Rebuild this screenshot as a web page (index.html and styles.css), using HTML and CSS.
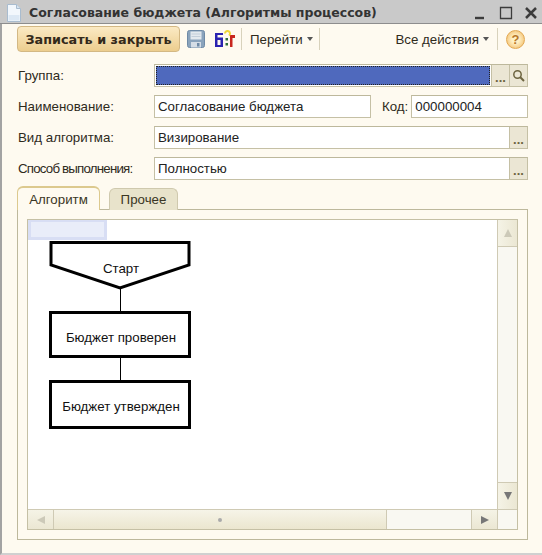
FILE: index.html
```html
<!DOCTYPE html>
<html lang="ru">
<head>
<meta charset="utf-8">
<title>Согласование бюджета</title>
<link rel="stylesheet" href="styles.css">
</head>
<body>
<div class="window">
  <header class="titlebar">
    <svg class="doc-icon" width="16" height="18" viewBox="0 0 16 18"><path d="M1.500 .5H10.500L14.500 4.500V17.500H1.500Z" fill="#f2f7fc" stroke="#a9bccf"/><path d="M10.500 .5V4.500H14.500" fill="#d6e3f0" stroke="#a9bccf"/><path d="M2.500 11H13.500V16.500H2.500Z" fill="#dce8f4"/></svg>
    <span class="title">Согласование бюджета (Алгоритмы процессов)</span>
    <div class="win-controls">
      <svg width="14" height="14" viewBox="0 0 14 14"><path d="M1 12H10" stroke="#3c3c3c" stroke-width="2.400"/></svg>
      <svg width="14" height="14" viewBox="0 0 14 14"><path d="M1.500 1.500H12.500V12.500H1.500Z" fill="none" stroke="#3c3c3c" stroke-width="1.300"/></svg>
      <svg width="12" height="14" viewBox="0 0 12 14"><path d="M1 2L11 12M11 2L1 12" stroke="#3c3c3c" stroke-width="2.500"/></svg>
    </div>
  </header>
  <main class="body">
    <div class="toolbar">
      <button class="primary">Записать и закрыть</button>
      <svg class="save" width="18" height="18" viewBox="0 0 18 18"><rect x=".5" y=".5" width="17" height="17" rx="2" fill="#8aa3bc" stroke="#6f8aa6"/><rect x="3.500" y="1.500" width="11" height="8" fill="#e4e9ee"/><path d="M4.500 4H13.500M4.500 6.500H13.500" stroke="#c3ced9"/><rect x="4" y="12" width="10" height="5.500" fill="#d5dde6"/><rect x="10" y="13" width="2.500" height="3.500" fill="#6f8aa6"/></svg>
      <svg class="bi" width="22" height="18" viewBox="0 0 22 18"><path d="M1 3H9V5H3.500V7.500H9V17H1Z M3.500 10V15H6.500V10Z" fill="#2a22b0" fill-rule="evenodd"/><path d="M16 5H21V8H18.500V17H16Z" fill="#c8261e"/><rect x="11.500" y="8" width="2.500" height="2.500" fill="#2f6f3a"/><rect x="11.500" y="13" width="2.500" height="2.500" fill="#2f6f3a"/><path d="M11 3.500A2.500 2.500 0 1 1 15 5.500" fill="none" stroke="#efd83a" stroke-width="2"/></svg>
      <span class="tb-sep"></span>
      <span class="tb-menu go">Перейти<i class="caret"></i></span>
      <span class="tb-sep after-go"></span>
      <span class="spacer"></span>
      <span class="tb-menu">Все действия<i class="caret"></i></span>
      <span class="tb-sep right"></span>
      <span class="help">?</span>
    </div>
    <div class="row">
      <label>Группа:</label>
      <div class="field grow selected"><span class="sel-fill"></span><span class="btn dots">...</span><span class="btn">
        <svg width="13" height="13" viewBox="0 0 13 13"><circle cx="5.500" cy="5.500" r="3.700" fill="none" stroke="#6d6440" stroke-width="1.500"/><path d="M8.300 8.300L12 12" stroke="#6d6440" stroke-width="2"/></svg></span></div>
    </div>
    <div class="row">
      <label>Наименование:</label>
      <div class="field name"><span class="val">Согласование бюджета</span></div>
      <label class="code-label">Код:</label>
      <div class="field grow"><span class="val">000000004</span></div>
    </div>
    <div class="row">
      <label>Вид алгоритма:</label>
      <div class="field grow"><span class="val">Визирование</span><span class="btn dots">...</span></div>
    </div>
    <div class="row">
      <label class="tight">Способ выполнения:</label>
      <div class="field grow"><span class="val">Полностью</span><span class="btn dots">...</span></div>
    </div>
    <div class="tabs">
      <span class="tab active">Алгоритм</span>
      <span class="tab">Прочее</span>
    </div>
    <section class="panel">
      <div class="chart-grid">
        <div class="canvas">
          <svg class="diagram" width="471" height="292" viewBox="0 0 471 292">
            <rect x="0" y="0" width="79" height="20" fill="#d8def4"/>
            <rect x="3" y="2" width="73" height="15" fill="#e9edf9"/>
            <g fill="#fff" stroke="#000" stroke-width="3">
              <path d="M23 22.500H161V45L92 68L23 45Z"/>
              <rect x="22.500" y="92.500" width="139" height="44"/>
              <rect x="22.500" y="161.500" width="139" height="46"/>
            </g>
            <path d="M92.500 69V91M92.500 138V160" stroke="#000" fill="none"/>
            <g class="node-text" text-anchor="middle">
              <text x="93" y="53">Старт</text>
              <text x="93" y="122">Бюджет проверен</text>
              <text x="93" y="191">Бюджет утвержден</text>
            </g>
          </svg>
        </div>
        <div class="vbar">
          <span class="sb-btn"><i class="arrow up light"></i></span>
          <span class="sb-track"></span>
          <span class="sb-btn"><i class="arrow down"></i></span>
        </div>
        <div class="hbar">
          <span class="sb-btn h"><i class="arrow left light"></i></span>
          <span class="sb-track h"><span class="thumb"><i class="thumb-dot"></i></span></span>
          <span class="sb-btn h"><i class="arrow right"></i></span>
        </div>
        <div class="corner"></div>
      </div>
    </section>
  </main>
</div>
</body>
</html>
```

FILE: styles.css
```css
* { box-sizing: border-box; }
html, body { margin: 0; padding: 0; }
body {
  width: 542px;
  height: 555px;
  overflow: hidden;
  background: #fff;
  font-family: "Liberation Sans", Arial, sans-serif;
  font-size: 13.300px;
  color: #2e2a1c;
}
.window {
  width: 542px;
  height: 555px;
  display: flex;
  flex-direction: column;
  background: #fefaf0;
}
.titlebar {
  height: 24px;
  flex: none;
  display: flex;
  align-items: center;
  padding: 2px 5px 0 6px;
  background: #c9c9c9;
  border-bottom: 1px solid #8d8d8d;
}
.doc-icon { flex: none; margin-right: 7px; }
.title {
  font-family: "DejaVu Sans", sans-serif;
  font-weight: 700;
  font-size: 12.500px;
  color: #333;
  white-space: nowrap;
}
.win-controls { margin-left: auto; display: flex; gap: 12px; }
.win-controls svg:first-child { margin-right: -1px; }
.body {
  flex: 1;
  display: flex;
  flex-direction: column;
  padding: 2px 14px 13px 15px;
  border-left: 2px solid #a3a3a3;
  border-bottom: 2px solid #d0d0d0;
  min-height: 0;
}
.toolbar {
  height: 26px;
  display: flex;
  align-items: center;
  flex: none;
}
.primary {
  width: 163px;
  height: 26px;
  padding: 0;
  font-family: "DejaVu Sans", sans-serif;
  font-weight: 700;
  font-size: 12.800px;
  color: #33291a;
  background: linear-gradient(#fbeac4, #eccd8e);
  border: 1px solid #d3b884;
  border-radius: 4px;
}
.save { margin-left: 7px; flex: none; }
.bi { margin-left: 9px; flex: none; }
.tb-sep { width: 1px; height: 22px; background: #d8d2bc; margin-left: 5px; flex: none; }
.tb-menu { margin-left: 8px; white-space: nowrap; display: flex; align-items: center; }
.tb-sep.after-go { margin-left: 6px; }
.tb-sep.right { margin-left: 8px; }
.caret {
  width: 0; height: 0; margin-left: 4px;
  border: 3.500px solid transparent;
  border-top: 4px solid #555;
  border-bottom: 0;
}
.spacer { flex: 1; }
.help {
  width: 19px; height: 19px;
  margin-left: 8px;
  margin-right: 3px;
  border-radius: 50%;
  background: radial-gradient(circle, #fff0c4 30%, #efb35c 100%);
  border: 1px solid #e2a851;
  color: #b8772a;
  font-weight: 700;
  font-size: 13px;
  line-height: 17px;
  text-align: center;
}
.row {
  display: flex;
  align-items: center;
  height: 23px;
  margin-top: 8px;
  flex: none;
}
.toolbar + .row { margin-top: 12px; }
.row label { width: 137px; flex: none; white-space: nowrap; padding-left: 1px; }
.row label.tight { letter-spacing: -.8px; }
.row label.code-label { width: auto; margin: 0 3px 0 11px; padding-left: 0; }
.field {
  height: 23px;
  display: flex;
  align-items: stretch;
  background: #fff;
  border: 1px solid #c5c0a5;
  border-top-color: #bdb89c;
  color: #222;
}
.grow { flex: 1; min-width: 0; }
.name { width: 217px; flex: none; }
.val { flex: 1; padding: 0 3px; line-height: 21px; white-space: nowrap; }
.sel-fill {
  flex: 1;
  margin: 1px;
  background: #4f69bd;
  outline: 1px dotted #222;
  outline-offset: -1px;
}
.btn {
  width: 18px;
  flex: none;
  display: flex;
  align-items: center;
  justify-content: center;
  background: #ebe6d4;
  border-left: 1px solid #c5c0a5;
  color: #6d6440;
}
.btn.dots {
  align-items: flex-end;
  font-weight: 700;
  font-size: 13px;
  line-height: 16px;
}
.tabs {
  display: flex;
  align-items: flex-end;
  gap: 9px;
  height: 24px;
  margin-top: 6px;
  margin-bottom: -1px;
  flex: none;
  position: relative;
  z-index: 1;
}
.tab {
  height: 22px;
  width: 69px;
  border: 1px solid #cfc9ae;
  border-bottom: 0;
  border-radius: 6px 6px 0 0;
  background: #e8e3cb;
  text-align: center;
  line-height: 21px;
  color: #3a3624;
}
.tab.active {
  width: 83px;
  height: 24px;
  line-height: 23px;
  background: #fefaf0;
  border-color: #dcc98e;
  border-top-width: 2px;
}
.panel {
  flex: 1;
  min-height: 0;
  border: 1px solid #bdb89c;
  padding: 9px 9px 9px 9px;
}
.chart-grid {
  height: 100%;
  display: grid;
  grid-template-columns: 1fr 20px;
  grid-template-rows: 1fr 20px;
  border: 1px solid #c5c0a5;
}
.canvas { background: #fff; min-width: 0; min-height: 0; overflow: hidden; }
.diagram { display: block; }
.node-text { font-family: "Liberation Sans", Arial, sans-serif; font-size: 13.300px; fill: #111; }
.vbar { display: flex; flex-direction: column; border-left: 1px solid #cfcab4; }
.hbar { display: flex; border-top: 1px solid #cfcab4; }
.sb-btn {
  flex: none;
  height: 26px;
  display: flex;
  align-items: center;
  justify-content: center;
  background: linear-gradient(90deg, #f5f3e6, #ebe7d3);
}
.sb-btn.h { width: 26px; height: auto; background: linear-gradient(#f5f3e6, #ebe7d3); border-right: 1px solid #cfcab4; }
.sb-btn.h:last-child { border-right: 0; border-left: 1px solid #cfcab4; }
.sb-track { flex: 1; background: #f9f8f2; border-top: 1px solid #cfcab4; border-bottom: 1px solid #cfcab4; }
.sb-track.h { border: 0; display: flex; }
.thumb {
  width: 333px;
  display: flex;
  align-items: center;
  justify-content: center;
  background: linear-gradient(#f6f4e8, #ebe6cf);
  border-right: 1px solid #cfcab4;
}
.thumb-dot { width: 4px; height: 4px; border-radius: 50%; background: #aaa; }
.corner { background: #f9f8f2; border-left: 1px solid #cfcab4; border-top: 1px solid #cfcab4; }
.arrow { width: 0; height: 0; border: 4.500px solid transparent; }
.arrow.up { border-top: 0; border-bottom: 8px solid #777; }
.arrow.down { border-bottom: 0; border-top: 8px solid #777; }
.arrow.left { border-left: 0; border-right: 8px solid #777; }
.arrow.right { border-right: 0; border-left: 8px solid #777; }
.arrow.light.up { border-bottom-color: #ccc9b8; }
.arrow.light.left { border-right-color: #ccc9b8; }
```
